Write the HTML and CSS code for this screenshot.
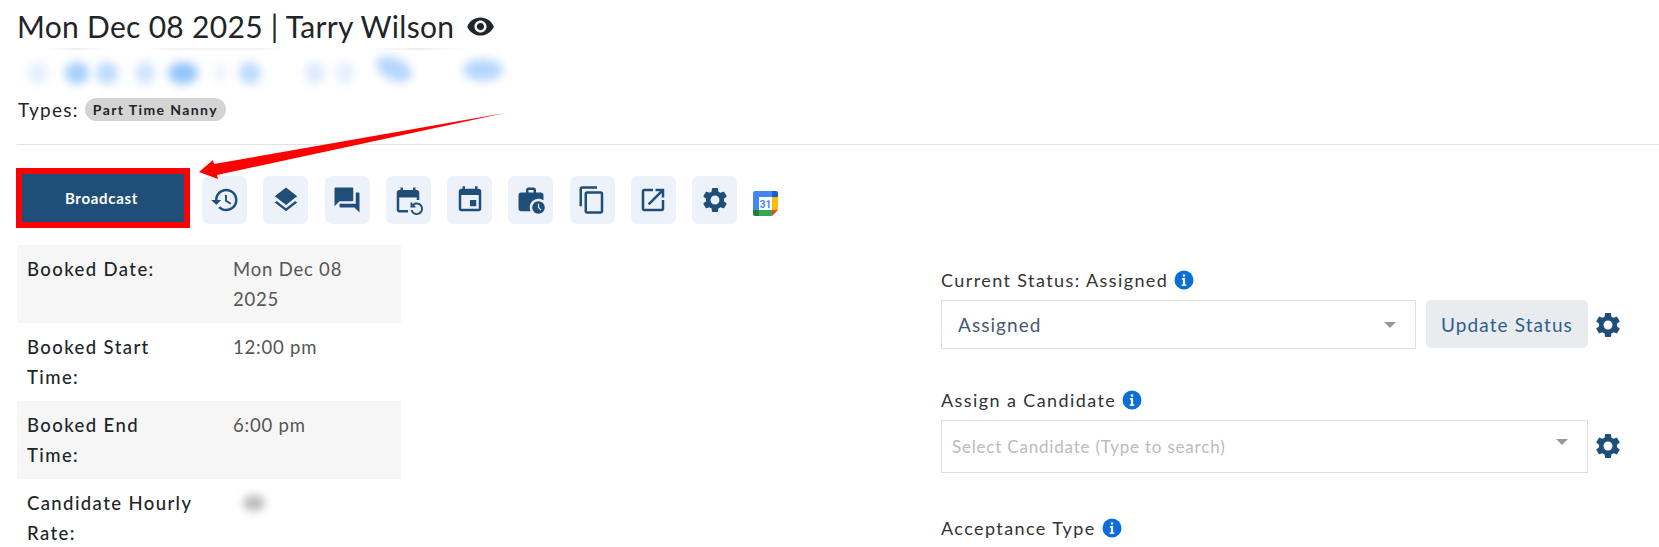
FILE: index.html
```html
<!DOCTYPE html>
<html lang="en">
<head>
    <meta charset="UTF-8">
    <meta name="viewport" content="width=device-width, initial-scale=1.0">
    <title>Booking</title>
    <link rel="stylesheet" href="styles.css">
</head>
<body>
    <svg class="defs" width="0" height="0">
        <symbol id="gear" viewBox="0 0 24 24"><path d="M19.14 12.94c.04-.3.06-.61.06-.94 0-.32-.02-.64-.07-.94l2.03-1.58c.18-.14.23-.41.12-.61l-1.92-3.32c-.12-.22-.37-.29-.59-.22l-2.39.96c-.5-.38-1.03-.7-1.62-.94l-.36-2.54c-.04-.24-.24-.41-.48-.41h-3.84c-.24 0-.43.17-.47.41l-.36 2.54c-.59.24-1.13.57-1.62.94l-2.39-.96c-.22-.08-.47 0-.59.22L2.74 8.87c-.12.21-.08.47.12.61l2.03 1.58c-.05.3-.09.63-.09.94s.02.64.07.94l-2.03 1.58c-.18.14-.23.41-.12.61l1.92 3.32c.12.22.37.29.59.22l2.39-.96c.5.38 1.03.7 1.62.94l.36 2.54c.05.24.24.41.48.41h3.84c.24 0 .44-.17.47-.41l.36-2.54c.59-.24 1.13-.56 1.62-.94l2.39.96c.22.08.47 0 .59-.22l1.92-3.32c.12-.22.07-.47-.12-.61l-2.01-1.58zM12 15.6c-1.98 0-3.6-1.62-3.6-3.6s1.62-3.6 3.6-3.6 3.6 1.62 3.6 3.6-1.62 3.6-3.6 3.6z"/></symbol>
        <symbol id="info" viewBox="0 0 20 20"><circle cx="10" cy="10" r="9.5" fill="#0d6ed8"/><rect x="8.7" y="4.2" width="2.6" height="2.6" rx="1.3" fill="#fff"/><rect x="8.9" y="8.2" width="2.2" height="7.4" fill="#fff"/><rect x="7.9" y="8.2" width="3" height="1.4" fill="#fff"/><rect x="7.7" y="14.4" width="4.6" height="1.4" fill="#fff"/></symbol>
    </svg>

    <header class="page-head">
        <h1 class="title">Mon Dec 08 2025 | Tarry Wilson
            <svg class="eye" viewBox="0 0 24 24"><path d="M12 4.5C7 4.5 2.73 7.61 1 12c1.73 4.39 6 7.5 11 7.5s9.27-3.11 11-7.5c-1.73-4.39-6-7.5-11-7.5zM12 17c-2.76 0-5-2.24-5-5s2.24-5 5-5 5 2.24 5 5-2.24 5-5 5zm0-8c-1.66 0-3 1.34-3 3s1.34 3 3 3 3-1.34 3-3-1.34-3-3-3z"/></svg>
        </h1>
        <div class="blurred">
            <span class="blob"></span><span class="blob"></span><span class="blob"></span><span class="blob"></span><span class="blob"></span><span class="blob"></span><span class="blob"></span><span class="blob"></span><span class="blob"></span><span class="blob"></span><span class="blob"></span>
        </div>
        <div class="types">Types: <span class="chip">Part Time Nanny</span></div>
    </header>

    <div class="toolbar">
        <div class="highlight"><button class="broadcast">Broadcast</button></div>
        <a class="tool"><svg viewBox="0 0 24 24"><path d="M13 3c-4.97 0-9 4.03-9 9H1l3.89 3.89.07.14L9 12H6c0-3.87 3.13-7 7-7s7 3.13 7 7-3.13 7-7 7c-1.93 0-3.68-.79-4.94-2.06l-1.42 1.42C8.27 19.99 10.51 21 13 21c4.97 0 9-4.03 9-9s-4.03-9-9-9zm-1 5v5l4.28 2.54.72-1.21-3.5-2.08V8H12z"/></svg></a>
        <a class="tool"><svg viewBox="0 0 24 24"><path d="M11.99 18.54l-7.37-5.73L3 14.07l9 7 9-7-1.63-1.27-7.38 5.74zM12 16l7.36-5.73L21 9l-9-7-9 7 1.63 1.27L12 16z"/></svg></a>
        <a class="tool"><svg viewBox="0 0 24 24"><path d="M21 6h-2v9H6v2c0 .55.45 1 1 1h11l4 4V7c0-.55-.45-1-1-1zm-4 6V3c0-.55-.45-1-1-1H3c-.55 0-1 .45-1 1v14l4-4h10c.55 0 1-.45 1-1z"/></svg></a>
        <a class="tool"><svg viewBox="0 0 24 24"><path d="M21 12V6c0-1.1-.9-2-2-2h-1V2h-2v2H8V2H6v2H5c-1.1 0-2 .9-2 2v14c0 1.1.9 2 2 2h7v-2H5V10h14v2h2zm-5.36 8c.43 1.45 1.77 2.5 3.36 2.5 1.93 0 3.5-1.57 3.5-3.5s-1.57-3.5-3.5-3.5c-.95 0-1.82.38-2.45 1H18V18h-4v-4h1.5v1.43c.9-.88 2.14-1.43 3.5-1.43 2.76 0 5 2.24 5 5s-2.24 5-5 5c-2.42 0-4.44-1.72-4.9-4h1.54z"/></svg></a>
        <a class="tool"><svg viewBox="0 0 24 24"><path d="M17 12h-5v5h5v-5zM16 1v2H8V1H6v2H5c-1.11 0-1.99.9-1.99 2L3 19c0 1.1.89 2 2 2h14c1.1 0 2-.9 2-2V5c0-1.1-.9-2-2-2h-1V1h-2zm3 18H5V8h14v11z"/></svg></a>
        <a class="tool"><svg viewBox="0 0 24 24"><path d="M18 11c1.49 0 2.87.47 4 1.26V8c0-1.11-.89-2-2-2h-4V4c0-1.11-.89-2-2-2h-4c-1.11 0-2 .89-2 2v2H4c-1.11 0-1.99.89-1.99 2L2 19c0 1.11.89 2 2 2h7.68c-.43-.91-.68-1.92-.68-3 0-3.87 3.13-7 7-7zM10 4h4v2h-4V4z"/><path d="M18 13c-2.76 0-5 2.24-5 5s2.24 5 5 5 5-2.24 5-5-2.24-5-5-5zm1.65 7.35L17.5 18.2V15h1v2.79l1.85 1.85-.7.71z"/></svg></a>
        <a class="tool"><svg viewBox="0 0 24 24"><path d="M16 1H4c-1.1 0-2 .9-2 2v14h2V3h12V1zm3 4H8c-1.1 0-2 .9-2 2v14c0 1.1.9 2 2 2h11c1.1 0 2-.9 2-2V7c0-1.1-.9-2-2-2zm0 16H8V7h11v14z"/></svg></a>
        <a class="tool"><svg viewBox="0 0 24 24"><path d="M19 19H5V5h7V3H5c-1.11 0-2 .9-2 2v14c0 1.1.89 2 2 2h14c1.1 0 2-.9 2-2v-7h-2v7zM14 3v2h3.59l-9.83 9.83 1.41 1.41L19 6.41V10h2V3h-7z"/></svg></a>
        <a class="tool"><svg viewBox="0 0 24 24"><use href="#gear"/></svg></a>
        <svg class="gcal" viewBox="0 0 25 25">
            <rect x="0" y="0" width="25" height="25" rx="2" fill="#fff"/>
            <path d="M2 0h17v6H6v13H0V2a2 2 0 0 1 2-2z" fill="#4285f4"/>
            <path d="M19 0h4a2 2 0 0 1 2 2v4h-6z" fill="#1a5fc8"/>
            <rect x="19" y="6" width="6" height="13" fill="#fbbc04"/>
            <rect x="6" y="19" width="13" height="6" fill="#34a853"/>
            <path d="M0 19h6v6H2a2 2 0 0 1-2-2z" fill="#188038"/>
            <path d="M19 19h6l-6 6z" fill="#ea4335"/>
            <rect x="6" y="6" width="13" height="13" fill="#fff"/>
            <text x="12.5" y="16.5" class="gcal-num">31</text>
        </svg>
    </div>

    <svg class="arrow" viewBox="0 0 320 75" width="320" height="75">
        <path d="M9 62 L23 50 L24 54 L315 3 L27 65 L28 69 Z" fill="#ff0000"/>
    </svg>

    <main class="content">
        <table class="details">
            <tr><th>Booked Date:</th><td>Mon Dec 08<br>2025</td></tr>
            <tr><th>Booked Start<br>Time:</th><td>12:00 pm</td></tr>
            <tr><th>Booked End<br>Time:</th><td>6:00 pm</td></tr>
            <tr><th>Candidate Hourly<br>Rate:</th><td><span class="blur-val"></span></td></tr>
        </table>

        <section class="side">
            <div class="field">
                <label class="field-label">Current Status: Assigned <svg class="info"><use href="#info"/></svg></label>
                <div class="field-row">
                    <div class="select status-select"><span>Assigned</span><i class="caret"></i></div>
                    <button class="update">Update Status</button>
                    <svg class="gear" viewBox="0 0 24 24"><use href="#gear"/></svg>
                </div>
            </div>
            <div class="field">
                <label class="field-label">Assign a Candidate <svg class="info"><use href="#info"/></svg></label>
                <div class="field-row">
                    <div class="select candidate-select"><span>Select Candidate (Type to search)</span><i class="caret"></i></div>
                    <svg class="gear" viewBox="0 0 24 24"><use href="#gear"/></svg>
                </div>
            </div>
            <div class="field">
                <label class="field-label">Acceptance Type <svg class="info"><use href="#info"/></svg></label>
            </div>
        </section>
    </main>
</body>
</html>
```

FILE: styles.css
```css
html, body {
    height: 100%;
    overflow: hidden;
}
body {
    margin: 0;
    padding: 0 0 0 16px;
    position: relative;
    font-family: 'Lato', 'Noto Sans', sans-serif;
    color: #212529;
    background-color: #fff;
}
.defs {
    position: absolute;
}
.page-head {
    height: 144px;
    margin-left: 1px;
    border-bottom: 1px solid #dee2e6;
}
.title {
    margin: 0;
    padding: 5px 0 0;
    height: 43px;
    font-size: 30px;
    font-weight: 400;
    line-height: 41px;
    letter-spacing: .3px;
    white-space: nowrap;
    display: flex;
    align-items: center;
    gap: 12px;
}
.eye {
    width: 29px;
    height: 29px;
    fill: #212529;
}
.blurred {
    width: 505px;
    height: 42px;
    padding-left: 11px;
    box-sizing: border-box;
    display: flex;
    align-items: center;
    background-image: linear-gradient(90deg, transparent 30px, #eeeeee 60px, transparent 90px, transparent 130px, #f3f3f3 150px, #f3f3f3 240px, transparent 265px, transparent 350px, #eeeeee 400px, transparent 450px);
    background-size: 100% 2px;
    background-repeat: no-repeat;
}
.blob {
    height: 22px;
    margin-top: 8px;
    border-radius: 50%;
    background-color: #a6cffc;
    filter: blur(5px);
}
.blob:nth-child(1) { width: 20px; background-color: #e3effe; }
.blob:nth-child(2) { width: 24px; margin-left: 17px; }
.blob:nth-child(3) { width: 22px; margin-left: 7px; background-color: #bcdbfd; }
.blob:nth-child(4) { width: 20px; margin-left: 17px; background-color: #cfe4fd; }
.blob:nth-child(5) { width: 30px; margin-left: 13px; background-color: #94c5fb; }
.blob:nth-child(6) { width: 12px; margin-left: 16px; background-color: #eef5fe; }
.blob:nth-child(7) { width: 22px; margin-left: 13px; background-color: #bcdbfd; }
.blob:nth-child(8) { width: 20px; margin-left: 44px; background-color: #dceafd; }
.blob:nth-child(9) { width: 18px; margin-left: 11px; background-color: #e3effe; }
.blob:nth-child(10) { width: 38px; margin-left: 21px; margin-top: 0; transform: rotate(25deg); background-color: #b5d7fd; }
.blob:nth-child(11) { width: 40px; margin-left: 50px; margin-top: 2px; background-color: #b5d7fd; }
.types {
    padding: 8px 0 0 1px;
    font-size: 19px;
    letter-spacing: 1.3px;
    display: flex;
    align-items: center;
    gap: 6px;
}
.chip {
    padding: 0 8px;
    height: 23px;
    line-height: 23px;
    border-radius: 12px;
    background-color: #d4d4d4;
    font-size: 14px;
    font-weight: 700;
    letter-spacing: 1.4px;
}
.toolbar {
    height: 100px;
    display: flex;
    align-items: flex-start;
}
.highlight {
    margin: 23px 12px 0 0;
    border: 6px solid #ff0000;
    width: 162px;
    height: 48px;
}
.broadcast {
    display: block;
    width: 100%;
    height: 100%;
    padding: 0 3px 0 0;
    border: none;
    background-color: #1f4e79;
    color: #fff;
    font-family: inherit;
    font-size: 15px;
    font-weight: 700;
    letter-spacing: .7px;
}
.tool {
    width: 45px;
    height: 48px;
    margin: 31px 16.25px 0 0;
    border-radius: 7px;
    background-color: #edf2fa;
    display: flex;
    align-items: center;
    justify-content: center;
}
.tool svg {
    width: 30px;
    height: 30px;
    fill: #1f4e79;
}
.gcal {
    width: 25px;
    height: 25px;
    margin-top: 46px;
}
.gcal-num {
    font-family: 'Roboto', sans-serif;
    font-size: 10px;
    font-weight: 700;
    fill: #4285f4;
    text-anchor: middle;
}
.arrow {
    position: absolute;
    left: 190px;
    top: 110px;
}
.content {
    display: grid;
    grid-template-columns: 384px 700px;
    column-gap: 540px;
    margin-left: 1px;
}
.details {
    width: 384px;
    border-collapse: collapse;
    font-size: 18.5px;
    line-height: 30px;
    align-self: start;
}
.details th, .details td {
    padding: 9px 10px;
    height: 60px;
    text-align: left;
    vertical-align: top;
}
.details th {
    width: 186px;
    font-weight: 500;
    letter-spacing: 1.4px;
}
.details td {
    font-weight: 400;
    letter-spacing: .8px;
    color: #555;
}
.details tr:nth-child(odd) {
    background-color: #f6f6f6;
}
.details tr:nth-child(4) {
    background-color: #fff;
}
.blur-val {
    display: block;
    width: 22px;
    height: 16px;
    margin: 7px 0 0 10px;
    border-radius: 50%;
    background-color: #bbb;
    filter: blur(4px);
}
.side {
    padding-top: 22px;
    color: #333;
}
.field {
    margin-bottom: 38px;
}
.field:nth-child(2) {
    margin-bottom: 42px;
}
.field-label {
    font-size: 18px;
    line-height: 26px;
    display: flex;
    align-items: center;
    gap: 6px;
    margin-bottom: 7px;
    letter-spacing: 1.4px;
}
.info {
    width: 20px;
    height: 20px;
}
.field-row {
    display: flex;
    align-items: flex-start;
}
.select {
    box-sizing: border-box;
    border: 1px solid #e0e0e0;
    display: flex;
    align-items: center;
    justify-content: space-between;
}
.status-select {
    width: 475px;
    height: 49px;
    padding: 0 19px 0 16px;
    font-size: 19px;
    color: #495a70;
    letter-spacing: 1.05px;
}
.candidate-select {
    width: 647px;
    height: 53px;
    padding: 0 19px 0 10px;
    font-size: 17px;
    color: #bbb;
    letter-spacing: .8px;
}
.candidate-select .caret {
    margin-top: -9px;
}
.caret {
    width: 0;
    height: 0;
    border-left: 6px solid transparent;
    border-right: 6px solid transparent;
    border-top: 6px solid #999;
}
.update {
    width: 162px;
    height: 48px;
    padding: 0;
    margin-left: 10px;
    border: none;
    border-radius: 5px;
    background-color: #e9ecef;
    color: #2f5f8c;
    font-family: inherit;
    font-size: 19px;
    letter-spacing: 1.1px;
}
.gear {
    width: 30px;
    height: 30px;
    margin: 10px 0 0 5px;
    fill: #1f4e79;
    flex: none;
}
.candidate-select + .gear {
    margin-top: 11px;
}
```
